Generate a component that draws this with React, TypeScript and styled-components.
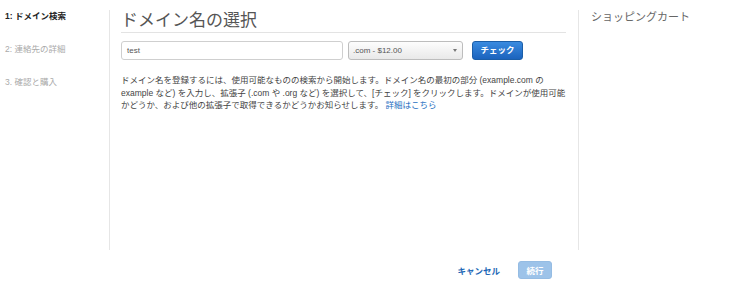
import { FC } from "react"
import styled, { createGlobalStyle } from "styled-components"

const GlobalStyle = createGlobalStyle`
  html, body {
    margin: 0;
    padding: 0;
    background: #fff;
  }
  body {
    font-family: "Liberation Sans", "Noto Sans CJK JP", sans-serif;
    color: #444;
  }
`

const Page = styled.div`
  width: 742px;
  height: 289px;
  display: flex;
  flex-direction: column;
  overflow: hidden;
`

const Columns = styled.div`
  display: flex;
  margin-top: 10px;
  height: 240px;
`

const Nav = styled.div`
  width: 104px;
  padding-left: 5px;
  border-right: 1px solid #e6e6e6;
  display: flex;
  flex-direction: column;
  gap: 21px;
`

const NavItem = styled.div<{ active?: boolean }>`
  font-size: 8.5px;
  line-height: 12px;
  font-weight: ${({ active }) => (active ? "bold" : "normal")};
  color: ${({ active }) => (active ? "#222" : "#aaa")};
  white-space: nowrap;
`

const Main = styled.div`
  width: 445px;
  padding: 0 12px 0 11px;
  border-right: 1px solid #e6e6e6;
`

const Title = styled.h1`
  margin: 0;
  font-size: 17px;
  line-height: 22px;
  font-weight: normal;
  color: #555;
  border-bottom: 1px solid #e3e3e3;
`

const FormRow = styled.div`
  display: flex;
  align-items: center;
  margin-top: 8px;
  height: 19px;
`

const TextInput = styled.div`
  box-sizing: border-box;
  width: 222px;
  height: 19px;
  border: 1px solid #cfcfcf;
  border-radius: 3px;
  padding-left: 5px;
  font-size: 8px;
  line-height: 17px;
  color: #555;
  background: #fff;
`

const Select = styled.div`
  box-sizing: border-box;
  position: relative;
  width: 115px;
  height: 19px;
  margin-left: 5px;
  border: 1px solid #bdbdbd;
  border-radius: 3px;
  padding-left: 4px;
  font-size: 8px;
  line-height: 17px;
  color: #555;
  background: linear-gradient(#fdfdfd, #e9e9e9);
`

const Caret = styled.span`
  position: absolute;
  right: 5px;
  top: 7px;
  width: 0;
  height: 0;
  border-left: 2.5px solid transparent;
  border-right: 2.5px solid transparent;
  border-top: 3px solid #777;
`

const CheckButton = styled.button`
  box-sizing: border-box;
  width: 51px;
  height: 19px;
  margin-left: 9px;
  padding: 0;
  border: 1px solid #1b5ea8;
  border-radius: 3px;
  background: linear-gradient(#3a8be0, #1b63bd);
  color: #fff;
  font-family: inherit;
  font-size: 8.5px;
  font-weight: bold;
  line-height: 17px;
`

const Description = styled.p`
  margin: 14px 0 0;
  font-size: 8.5px;
  line-height: 12.5px;
  color: #444;
  width: 460px;
  white-space: nowrap;
`

const Link = styled.a`
  color: #1f6fbf;
  text-decoration: none;
`

const Cart = styled.div`
  padding-left: 12px;
  font-size: 11px;
  line-height: 14px;
  color: #666;
`

const Footer = styled.div`
  flex: 1;
  display: flex;
  align-items: center;
  justify-content: flex-end;
  padding-right: 190px;
  gap: 18px;
`

const CancelLink = styled.a`
  font-size: 8.5px;
  font-weight: bold;
  color: #1a66b5;
  text-decoration: none;
`

const ContinueButton = styled.button`
  box-sizing: border-box;
  width: 34px;
  height: 18px;
  padding: 0;
  border: 1px solid #95bce3;
  border-radius: 3px;
  background: #9dc3e9;
  color: #fff;
  font-family: inherit;
  font-size: 8.5px;
  font-weight: bold;
`

const App: FC = () => (
  <Page>
    <GlobalStyle />
    <Columns>
      <Nav>
        <NavItem active>1: ドメイン検索</NavItem>
        <NavItem>2: 連絡先の詳細</NavItem>
        <NavItem>3. 確認と購入</NavItem>
      </Nav>
      <Main>
        <Title>ドメイン名の選択</Title>
        <FormRow>
          <TextInput>test</TextInput>
          <Select>
            .com - $12.00
            <Caret />
          </Select>
          <CheckButton>チェック</CheckButton>
        </FormRow>
        <Description>
          ドメイン名を登録するには、使用可能なものの検索から開始します。ドメイン名の最初の部分 (example.com の
          <br />
          example など) を入力し、拡張子 (.com や .org など) を選択して、[チェック] をクリックします。ドメインが使用可能
          <br />
          かどうか、および他の拡張子で取得できるかどうかお知らせします。 <Link href="#">詳細はこちら</Link>
        </Description>
      </Main>
      <Cart>ショッピングカート</Cart>
    </Columns>
    <Footer>
      <CancelLink href="#">キャンセル</CancelLink>
      <ContinueButton>続行</ContinueButton>
    </Footer>
  </Page>
)

export default App
